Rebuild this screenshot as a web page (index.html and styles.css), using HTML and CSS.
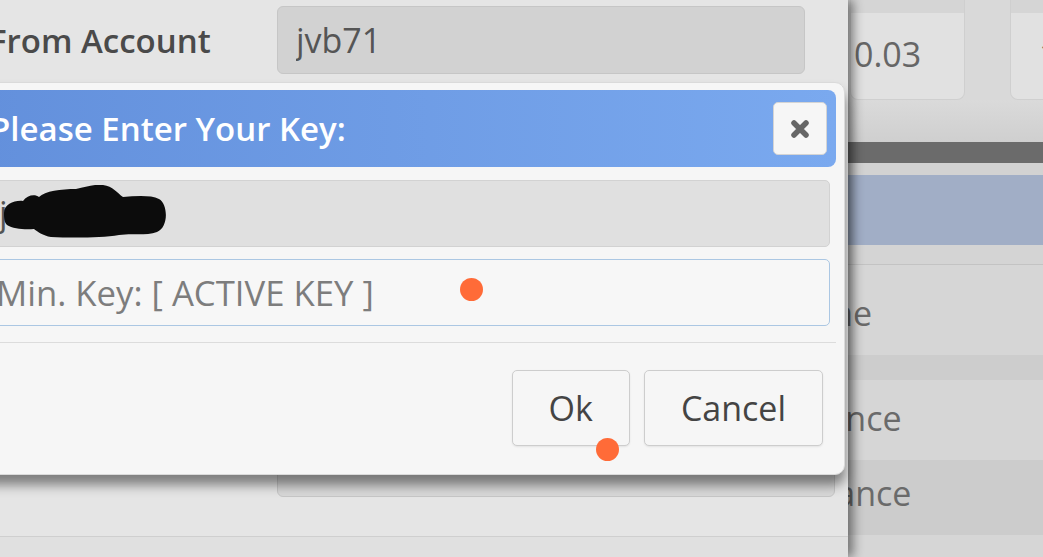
FILE: index.html
```html
<!DOCTYPE html>
<html lang="en">
<head>
<meta charset="UTF-8">
<meta name="viewport" content="width=device-width, initial-scale=1.0">
<title>Transfer</title>
<link rel="stylesheet" href="styles.css">
</head>
<body>
  <div class="page">
    <main class="form-panel">
      <div class="form-row">
        <label class="form-label">From Account</label>
        <input class="form-input" type="text" value="jvb71" readonly>
      </div>
      <div class="form-row">
        <label class="form-label">To Account</label>
        <input class="form-input" type="text" readonly>
      </div>
      <div class="form-row">
        <label class="form-label">Amount</label>
        <input class="form-input" type="text" readonly>
      </div>
      <div class="form-row">
        <label class="form-label">Asset</label>
        <input class="form-input" type="text" readonly>
      </div>
      <div class="form-row">
        <label class="form-label">Fee</label>
        <input class="form-input" type="text" readonly>
      </div>
      <div class="form-row memo-row">
        <label class="form-label">Memo</label>
        <input class="form-input memo-input" type="text" readonly>
      </div>
      <div class="form-footer"></div>
    </main>

    <aside class="side-panel">
      <div class="stat-row">
        <div class="stat-card">
          <div class="stat-head"></div>
          <div class="stat-value">0.03</div>
        </div>
        <div class="stat-card wide">
          <div class="stat-head"></div>
          <div class="stat-value far">1.000</div>
        </div>
      </div>
      <div class="side-gap"></div>
      <div class="side-bar"></div>
      <div class="side-gap small"></div>
      <div class="side-tab"></div>
      <div class="side-gap list-top"></div>
      <div class="side-item first">Name</div>
      <div class="side-sep"></div>
      <div class="side-item second">Balance</div>
      <div class="side-item third">Advance</div>
    </aside>
  </div>

  <div class="dialog">
    <div class="dialog-titlebar">
      <span class="dialog-title">Please Enter Your Key:</span>
      <button class="dialog-close" title="Close">
        <svg width="20" height="20" viewBox="0 0 20 20">
          <path d="M4 4 L16 16 M16 4 L4 16" stroke="#666" stroke-width="5.5" stroke-linecap="round"/>
        </svg>
      </button>
    </div>
    <div class="dialog-content">
      <div class="key-field">j
        <svg class="redact" width="170" height="54" viewBox="0 184 170 54">
          <path d="M3 212 C3 203 14 199 22 200 C26 194 34 193 38 196 C44 190 60 188 75 188 C85 186 92 183 102 184 C112 185 116 192 122 196 C135 195 150 194 158 198 C167 203 168 226 156 231 C145 235 130 232 118 234 C100 237 70 237 50 236 C42 235 36 230 33 228 C25 229 12 228 6 224 C3 221 3 216 3 212 Z" fill="#0c0c0c"/>
        </svg>
      </div>
      <input class="key-input" type="password" placeholder="Min. Key: [ ACTIVE KEY ]">
    </div>
    <div class="dialog-buttons">
      <button class="dialog-btn">Ok</button>
      <button class="dialog-btn">Cancel</button>
    </div>
  </div>

  <span class="touch touch-input"></span>
  <span class="touch touch-ok"></span>
</body>
</html>
```

FILE: styles.css
```css
* {
  box-sizing: border-box;
}

body {
  margin: 0;
  width: 1043px;
  height: 557px;
  overflow: hidden;
  position: relative;
  font-family: 'Open Sans', 'Noto Sans', sans-serif;
  font-size: 34px;
  background-color: #e5e5e5;
}

.page {
  display: flex;
  height: 557px;
}

/* left column: the transfer form */
.form-panel {
  width: 848px;
  flex: none;
  display: flex;
  flex-direction: column;
  gap: 17px;
  padding-top: 6px;
  background-color: #e5e5e5;
  position: relative;
  z-index: 1;
  box-shadow: 5px 0 10px rgba(0, 0, 0, 0.48);
}

.form-row {
  display: flex;
  align-items: center;
  height: 68px;
}

.form-label {
  width: 288px;
  flex: none;
  margin-left: -11px;
  font-size: 33px;
  font-weight: 600;
  color: #4a4a4a;
}

.form-input {
  width: 528px;
  height: 68px;
  padding: 0 18px;
  font: inherit;
  color: #555;
  background-color: #d2d2d2;
  border: 1px solid #c6c6c6;
  border-radius: 6px;
  outline: none;
}

.memo-row {
  align-items: flex-start;
}

.memo-input {
  width: 558px;
  height: 66px;
  background-color: #d8d8d8;
}

.form-footer {
  flex: 1;
  margin-top: 20px;
  border-top: 1px solid #cfcfcf;
  background-color: #e0e0e0;
}

/* right column */
.side-panel {
  flex: 1;
  overflow: hidden;
  background-color: #d6d6d6;
}

.stat-row {
  display: flex;
  gap: 45px;
  height: 100px;
  padding-left: 2px;
  background-color: #d9d9d9;
}

.stat-card {
  width: 115px;
  flex: none;
  background-color: #e1e1e1;
  border: 1px solid #cfcfcf;
  border-top: none;
  border-radius: 0 0 8px 8px;
}

.stat-card.wide {
  width: 120px;
}

.stat-head {
  height: 13px;
  background-color: #d5d5d5;
}

.stat-value {
  padding: 19px 0 0 3px;
  line-height: 45px;
  color: #666;
}

.stat-value.far {
  padding-left: 28px;
}

.side-gap {
  height: 42px;
  background: linear-gradient(#dadada, #cfcfcf);
}

.side-gap.small {
  height: 12px;
  background: #d2d2d2;
}

.side-gap.list-top {
  height: 20px;
  background: #d4d4d4;
  border-bottom: 1px solid #c3c3c3;
}

.side-bar {
  height: 21px;
  background-color: #6b6b6b;
}

.side-tab {
  height: 70px;
  background-color: #a1aec6;
}

.side-item {
  margin-left: -71px;
  line-height: 45px;
  white-space: nowrap;
  color: #6a6a6a;
  background-color: #d6d6d6;
}

.side-item.first {
  height: 90px;
  padding-top: 26px;
}

.side-item.second {
  height: 80px;
  padding-top: 16px;
}

.side-item.third {
  height: 75px;
  padding-top: 11px;
  background-color: #cccccc;
}

.side-sep {
  height: 25px;
  background-color: #cdcdcd;
}

/* key prompt dialog */
.dialog {
  position: absolute;
  left: -24px;
  top: 82px;
  width: 869px;
  z-index: 2;
  padding: 7px 8px;
  background-color: #f6f6f6;
  border: 1px solid #dadada;
  border-radius: 10px;
  box-shadow: 0 10px 12px rgba(0, 0, 0, 0.45);
}

.dialog-titlebar {
  display: flex;
  align-items: center;
  justify-content: space-between;
  height: 77px;
  padding: 0 9px 0 5px;
  border-radius: 8px;
  background: linear-gradient(to right, #6390dc, #7aa9ef);
}

.dialog-title {
  font-size: 33px;
  font-weight: 600;
  color: #fff;
  line-height: 45px;
}

.dialog-close {
  display: flex;
  align-items: center;
  justify-content: center;
  width: 54px;
  height: 53px;
  padding: 0;
  background-color: #f6f6f6;
  border: 1px solid #d4d4d4;
  border-radius: 5px;
}

.dialog-content {
  padding: 13px 6px 16px 0;
}

.key-field {
  position: relative;
  height: 67px;
  padding-left: 13px;
  line-height: 65px;
  color: #555;
  background-color: #e0e0e0;
  border: 1px solid #d2d2d2;
  border-radius: 5px;
}

.redact {
  position: absolute;
  left: 15px;
  top: 4px;
}

.key-input {
  display: block;
  width: 100%;
  height: 67px;
  margin-top: 12px;
  padding: 0 10px;
  font: inherit;
  font-size: 34.7px;
  color: #555;
  background-color: #f7f7f7;
  border: 1px solid #abc7e3;
  border-radius: 5px;
  outline: none;
}

.key-input::placeholder {
  color: #7d7d7d;
}

.dialog-buttons {
  display: flex;
  justify-content: flex-end;
  gap: 14px;
  padding: 27px 13px 21px 0;
  border-top: 1px solid #dcdcdc;
}

.dialog-btn {
  height: 76px;
  padding: 0 36px;
  font: inherit;
  color: #444;
  background-color: #f6f6f6;
  border: 1px solid #cdcdcd;
  border-radius: 5px;
  box-shadow: 0 1px 2px rgba(0, 0, 0, 0.08);
}

/* touch markers from the screen recording */
.touch {
  position: absolute;
  z-index: 3;
  width: 23px;
  height: 23px;
  border-radius: 50%;
  background-color: #ff6b38;
}

.touch-input {
  left: 460px;
  top: 278px;
}

.touch-ok {
  left: 596px;
  top: 438px;
}
```
